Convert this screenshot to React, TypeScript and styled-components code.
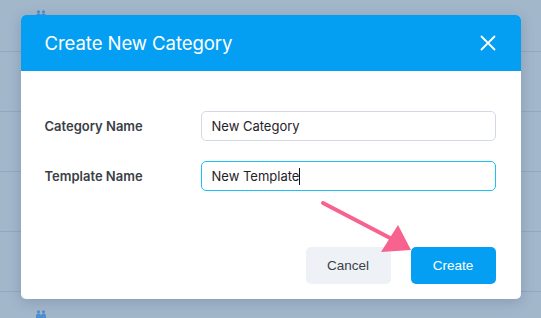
import React, { useEffect, useRef, useState } from "react";
import styled, { createGlobalStyle } from "styled-components";

const GlobalStyle = createGlobalStyle`
  html, body {
    margin: 0;
    padding: 0;
  }
  body {
    font-family: Inter, "Noto Sans", sans-serif;
    -webkit-font-smoothing: antialiased;
  }
`;

const INPUT_FONT = '13px Inter, "Noto Sans", sans-serif';

const Page = styled.div`
  position: relative;
  width: 541px;
  height: 318px;
  overflow: hidden;
  background: #a3b7cb;
`;

const Backdrop = styled.div`
  display: flex;
  flex-direction: column;
  margin-top: -8px;
`;

const BackRow = styled.div`
  height: 60px;
  border-bottom: 1px solid #93a8be;
  padding: 18px 0 0 35px;
  box-sizing: border-box;
  flex-shrink: 0;
  display: flex;
  align-items: flex-start;
`;

const Overlay = styled.div`
  position: absolute;
  inset: 0;
  display: flex;
  justify-content: center;
  align-items: flex-start;
  padding-top: 15px;
`;

const Modal = styled.div`
  width: 500px;
  background: #ffffff;
  border-radius: 5px;
  box-shadow: 0 3px 14px rgba(40, 60, 90, 0.22);
  overflow: hidden;
`;

const Header = styled.div`
  height: 56px;
  background: #049ff2;
  display: flex;
  align-items: center;
  justify-content: space-between;
  padding: 0 24px 0 24px;
  box-sizing: border-box;
`;

const Title = styled.h2`
  margin: 0;
  font-size: 18.6px;
  font-weight: 400;
  color: #ffffff;
  letter-spacing: -0.1px;
`;

const CloseButton = styled.button`
  border: none;
  background: transparent;
  padding: 0;
  width: 16px;
  height: 16px;
  display: flex;
  cursor: pointer;
  margin-right: 1px;
`;

const Body = styled.div`
  padding: 40px 25px 0 24px;
  display: flex;
  flex-direction: column;
  gap: 20px;
`;

const FieldRow = styled.div`
  display: grid;
  grid-template-columns: 156px 1fr;
  align-items: center;
`;

const Label = styled.label`
  font-size: 13px;
  font-weight: 600;
  color: #3b4047;
`;

const InputWrap = styled.div`
  position: relative;
  display: flex;
`;

const TextInput = styled.input<{ $active?: boolean }>`
  flex: 1;
  height: 30px;
  box-sizing: border-box;
  border-radius: 5px;
  border: 1px solid ${(p) => (p.$active ? "#1cc0f2" : "#d3d9e3")};
  padding: 0 10px;
  font: ${INPUT_FONT};
  color: #1f2328;
  outline: none;
  caret-color: transparent;
`;

const Caret = styled.span`
  position: absolute;
  top: 7px;
  width: 1px;
  height: 17px;
  background: #111;
  pointer-events: none;
`;

const Footer = styled.div`
  display: flex;
  justify-content: flex-end;
  gap: 20px;
  padding: 56px 25px 15px;
`;

const Button = styled.button<{ $primary?: boolean }>`
  width: 85px;
  height: 37px;
  border: none;
  border-radius: 5px;
  font-family: "Liberation Sans", Arial, sans-serif;
  font-size: 13.5px;
  color: ${(p) => (p.$primary ? "#ffffff" : "#3b4047")};
  background: ${(p) => (p.$primary ? "#049ff2" : "#eef2f6")};
  cursor: pointer;
`;

const ArrowLayer = styled.svg`
  position: absolute;
  left: 0;
  top: 0;
  pointer-events: none;
`;

const PeopleIcon = () => (
  <svg width="12" height="8" viewBox="0 0 12 8" style={{ display: "block" }}>
    <g fill="#4b8fd2">
      <circle cx="3.5" cy="1.8" r="1.6" />
      <circle cx="8.5" cy="1.8" r="1.6" />
      <path d="M1 8 V5.5 Q1 3.6 3.5 3.6 Q6 3.6 6 5.5 V8 Z" />
      <path d="M6 8 V5.5 Q6 3.6 8.5 3.6 Q11 3.6 11 5.5 V8 Z" />
    </g>
  </svg>
);

const CloseIcon = () => (
  <svg width="16" height="16" viewBox="0 0 16 16">
    <path d="M1.5 1.5 L14.5 14.5 M14.5 1.5 L1.5 14.5" stroke="#ffffff" strokeWidth="1.8" strokeLinecap="round" />
  </svg>
);

const rows = [0, 1, 2, 3, 4, 5];

const measure = (text: string) => {
  const ctx = document.createElement("canvas").getContext("2d");
  if (!ctx) return 0;
  ctx.font = INPUT_FONT;
  return ctx.measureText(text).width;
};

export default function App() {
  const templateValue = "New Template";
  const [caretLeft, setCaretLeft] = useState(11 + measure(templateValue));
  const templateRef = useRef<HTMLInputElement>(null);

  useEffect(() => {
    document.fonts?.ready.then(() => setCaretLeft(11 + measure(templateValue)));
  }, []);

  return (
    <>
      <GlobalStyle />
      <Page>
        <Backdrop>
          {rows.map((r) => (
            <BackRow key={r}>
              <PeopleIcon />
            </BackRow>
          ))}
        </Backdrop>
        <Overlay>
          <Modal>
            <Header>
              <Title>Create New Category</Title>
              <CloseButton aria-label="Close">
                <CloseIcon />
              </CloseButton>
            </Header>
            <Body>
              <FieldRow>
                <Label>Category Name</Label>
                <InputWrap>
                  <TextInput defaultValue="New Category" />
                </InputWrap>
              </FieldRow>
              <FieldRow>
                <Label>Template Name</Label>
                <InputWrap>
                  <TextInput ref={templateRef} $active defaultValue={templateValue} />
                  <Caret style={{ left: caretLeft }} />
                </InputWrap>
              </FieldRow>
            </Body>
            <Footer>
              <Button>Cancel</Button>
              <Button $primary>Create</Button>
            </Footer>
          </Modal>
        </Overlay>
        <ArrowLayer width="541" height="318" viewBox="0 0 541 318">
          <line x1="323" y1="203" x2="392" y2="239" stroke="#f7628f" strokeWidth="4" strokeLinecap="round" />
          <polygon points="398,225 381,252 411,250" fill="#f7628f" />
        </ArrowLayer>
      </Page>
    </>
  );
}
